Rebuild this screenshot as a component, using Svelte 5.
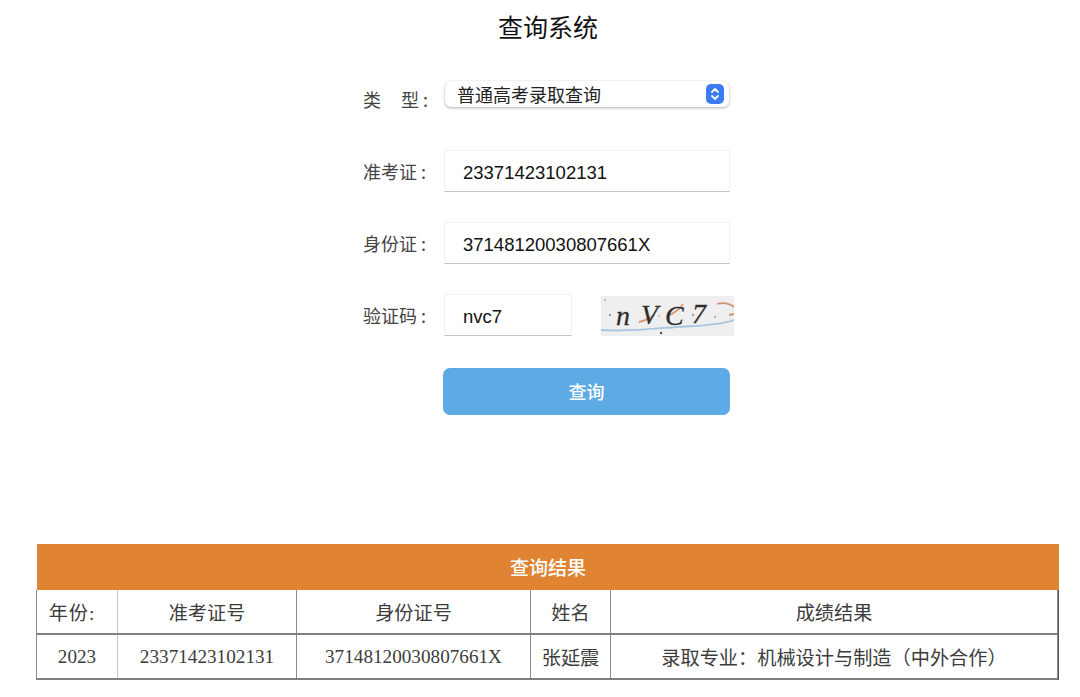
<script>
  const rows = [
    { label: '准考证', value: '23371423102131' },
    { label: '身份证', value: '37148120030807661X' }
  ];
  const headers = ['年份:', '准考证号', '身份证号', '姓名', '成绩结果'];
  const cells = ['2023', '23371423102131', '37148120030807661X', '张延震', '录取专业\uFF1A机械设计与制造\uFF08中外合作\uFF09'];
</script>

<main class="page">
  <h1>查询系统</h1>

  <form class="form" onsubmit={(e) => e.preventDefault()}>
    <div class="row type-row">
      <span class="label type-label"><span>类</span><span>型<span class="colon">:</span></span></span>
      <div class="select">
        <span>普通高考录取查询</span>
        <span class="stepper">
          <svg width="12" height="14" viewBox="0 0 12 14" fill="none" stroke="#fff" stroke-width="1.8" stroke-linecap="round" stroke-linejoin="round">
            <path d="M3 5l3-3 3 3" />
            <path d="M3 9l3 3 3-3" />
          </svg>
        </span>
      </div>
    </div>

    {#each rows as row}
      <div class="row">
        <span class="label">{row.label}<span class="colon">:</span></span>
        <input class="input" value={row.value} />
      </div>
    {/each}

    <div class="row">
      <span class="label">验证码<span class="colon">:</span></span>
      <input class="input short" value="nvc7" />
      <svg class="captcha" width="133" height="40" viewBox="0 0 133 40">
        <rect width="133" height="40" fill="#f0efef" />
        <path d="M0 34C30 36 60 32 75 31S115 30 133 24" fill="none" stroke="#a9c6e0" stroke-width="1.8" />
        <path d="M38 26c5-1 10-3 15-7" fill="none" stroke="#d6956e" stroke-width="1.8" />
        <path d="M67 20c6-3 12-7 15-12" fill="none" stroke="#d6956e" stroke-width="1.6" />
        <path d="M116 8c7-2 12-1 17 3M133 18l-5 1" fill="none" stroke="#cf9274" stroke-width="1.8" />
        <circle cx="4" cy="4" r="1" fill="#aaa" />
        <circle cx="9" cy="19" r="1" fill="#777" />
        <circle cx="60" cy="37" r="1.2" fill="#5b4a50" />
        <circle cx="58" cy="20" r="1" fill="#bbb" />
        <circle cx="92" cy="19" r="1.2" fill="#7fa6c9" />
        <circle cx="114" cy="21" r="1" fill="#999" />
        <text x="15" y="29" class="cap-text">n</text>
        <text x="40" y="28" class="cap-text">V</text>
        <text x="64" y="29" class="cap-text">C</text>
        <text x="91" y="27" class="cap-text">7</text>
      </svg>
    </div>

    <div class="row">
      <span class="label"></span>
      <button class="submit" type="submit">查询</button>
    </div>
  </form>

  <section class="results">
    <div class="results-title">查询结果</div>
    <table>
      <thead>
        <tr>
          {#each headers as h, i}
            <th class={'c' + i}>{h}</th>
          {/each}
        </tr>
      </thead>
      <tbody>
        <tr>
          {#each cells as c, i}
            <td class={'c' + i}>{c}</td>
          {/each}
        </tr>
      </tbody>
    </table>
  </section>
</main>

<style>
  :global(body) {
    margin: 0;
    background: #fff;
  }
  .page {
    padding: 0 21px 0 37px;
    height: 697px;
    box-sizing: border-box;
    overflow: hidden;
    font-family: "Liberation Serif", "Noto Sans CJK SC", serif;
    color: #333;
  }
  h1 {
    margin: 0;
    padding-top: 8px;
    height: 70px;
    box-sizing: border-box;
    text-align: center;
    font: 400 25px/36px "Noto Sans CJK SC", sans-serif;
    color: #111;
  }
  .form {
    width: 370px;
    margin: 0 auto;
    display: flex;
    flex-direction: column;
    gap: 30px;
    padding-top: 11px;
  }
  .row {
    display: flex;
    align-items: center;
    height: 42px;
  }
  .type-row {
    height: 26px;
    margin-bottom: 13px;
  }
  .label {
    width: 81px;
    flex: none;
    font: 400 18px/26px "Noto Sans CJK SC", sans-serif;
    color: #444;
  }
  .colon {
    margin-left: 4px;
  }
  .type-label {
    display: flex;
    gap: 20px;
    padding-top: 10px;
    box-sizing: border-box;
    height: 36px;
  }
  .select {
    width: 284px;
    height: 26px;
    margin-left: 1px;
    box-sizing: border-box;
    padding: 0 5px 0 12px;
    display: flex;
    align-items: center;
    justify-content: space-between;
    background: #fff;
    border-radius: 6px;
    box-shadow: 0 1px 3px rgba(0, 0, 0, 0.3), 0 0 1px rgba(0, 0, 0, 0.15);
    font: 400 18px/26px "Noto Sans CJK SC", sans-serif;
    color: #222;
  }
  .stepper {
    width: 18px;
    height: 20px;
    border-radius: 5px;
    background: #3c7bf3;
    display: flex;
    align-items: center;
    justify-content: center;
  }
  .input {
    width: 286px;
    height: 42px;
    box-sizing: border-box;
    border: 1px solid #f0f0f0;
    border-bottom: 1px solid #c4c4c4;
    padding: 3px 18px 0;
    font: 400 18.5px "Liberation Sans", sans-serif;
    color: #111;
    background: #fff;
    outline: none;
  }
  .short {
    width: 128px;
  }
  .captcha {
    margin: 2px 0 0 29px;
    flex: none;
  }
  .cap-text {
    font: italic 500 28px "Liberation Serif", serif;
    fill: #2e2e2e;
    stroke: #2e2e2e;
    stroke-width: 0.3px;
  }
  .submit {
    width: 287px;
    height: 47px;
    margin-left: -1px;
    margin-top: 9px;
    border: none;
    border-radius: 7px;
    background: #5eaae4;
    color: #fff;
    font: 500 18px "Noto Sans CJK SC", sans-serif;
    padding: 0 0 2px;
  }
  .results {
    margin-top: 136px;
    border-right: 1px solid #555;
  }
  .results-title {
    height: 46px;
    background: #e08433;
    color: #fff;
    text-align: center;
    font: 500 19px/46px "Noto Sans CJK SC", sans-serif;
    margin-right: -1px;
  }
  table {
    width: calc(100% + 1px);
    margin-left: -1px;
    border-collapse: collapse;
    table-layout: fixed;
    font-size: 19.2px;
    color: #3c3c3c;
  }
  th, td {
    border: 1px solid #8a8a8a;
    border-top: none;
    padding: 0;
    text-align: center;
    font-weight: 400;
    font-family: "Liberation Serif", "Noto Sans CJK SC", serif;
  }
  th { height: 43px; border-bottom: 2px solid #808080; }
  td { height: 43px; border-bottom: 2px solid #808080; }
  .c0 { width: 80px; border-right-color: #c4c4c4; }
  .c1 { width: 178px; }
  .c2 { width: 233px; }
  .c3 { width: 79px; }
  th.c0 { width: 70px; letter-spacing: 1px; padding-right: 10px; }
</style>
